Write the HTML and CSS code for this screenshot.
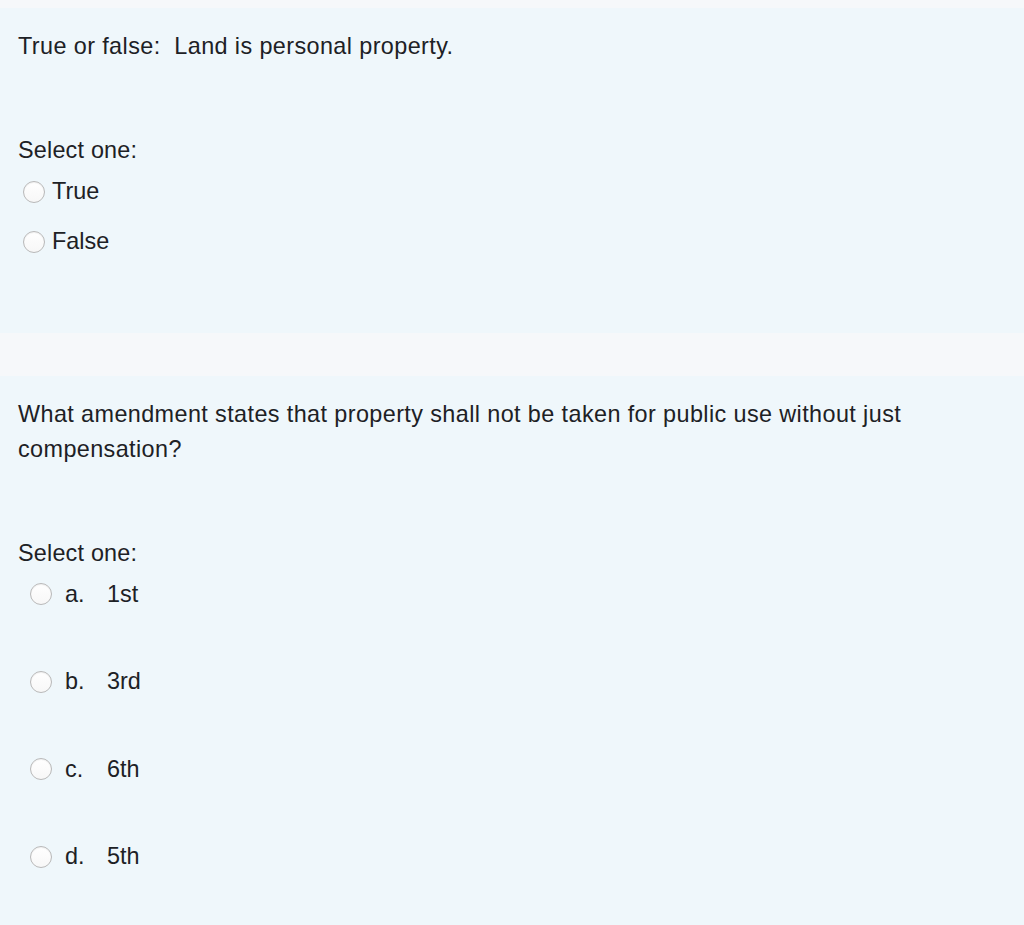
FILE: index.html
```html
<!DOCTYPE html>
<html lang="en">
<head>
<meta charset="utf-8">
<title>Quiz</title>
<link rel="stylesheet" href="styles.css">
</head>
<body>
<div class="page">
  <section class="que que-tf">
    <div class="qtext">True or false:&nbsp; Land is personal property.</div>
    <div class="prompt">Select one:</div>
    <div class="answers">
      <label class="opt"><span class="radio"></span><span class="opt-text">True</span></label>
      <label class="opt"><span class="radio"></span><span class="opt-text">False</span></label>
    </div>
  </section>
  <div class="spacer"></div>
  <section class="que que-mc">
    <div class="qtext">What amendment states that property shall not be taken for public use without just compensation?</div>
    <div class="prompt">Select one:</div>
    <div class="answers">
      <label class="opt"><span class="radio"></span><span class="letter">a.</span><span class="opt-text">1st</span></label>
      <label class="opt"><span class="radio"></span><span class="letter">b.</span><span class="opt-text">3rd</span></label>
      <label class="opt"><span class="radio"></span><span class="letter">c.</span><span class="opt-text">6th</span></label>
      <label class="opt"><span class="radio"></span><span class="letter">d.</span><span class="opt-text">5th</span></label>
    </div>
  </section>
</div>
</body>
</html>
```
FILE: styles.css
```css
html, body {
  margin: 0;
  padding: 0;
  background: #f6f8fa;
}
body {
  font-family: "Liberation Sans", Arial, sans-serif;
  font-size: 23.4px;
  line-height: 35px;
  color: #1d2125;
}
.page {
  padding-top: 8px;
}
.que {
  background: #eff7fb;
  padding: 21px 18px 0 18px;
}
.que-tf {
  padding-bottom: 73.5px;
}
.que-mc {
  padding-bottom: 80px;
}
.spacer {
  height: 43px;
}
.qtext {
  max-width: 960px;
  letter-spacing: 0.4px;
}
.prompt {
  margin-top: 69px;
  letter-spacing: 0.2px;
}
.answers {
  display: flex;
  flex-direction: column;
  margin-top: 6px;
}
.opt {
  display: flex;
  align-items: center;
  height: 35px;
}
.que-tf .answers {
  gap: 15px;
}
.que-mc .answers {
  gap: 52.5px;
}
.radio {
  box-sizing: border-box;
  width: 22px;
  height: 22px;
  border-radius: 50%;
  border: 1px solid #b9b9b9;
  background: linear-gradient(#ffffff, #f7f7f7);
  box-shadow: inset 0 1px 1px rgba(0,0,0,0.06);
  flex: none;
}
.que-tf .radio {
  margin-left: 5px;
  margin-right: 7px;
}
.que-mc .radio {
  margin-left: 12px;
  margin-right: 13px;
}
.letter {
  width: 42px;
}
```
